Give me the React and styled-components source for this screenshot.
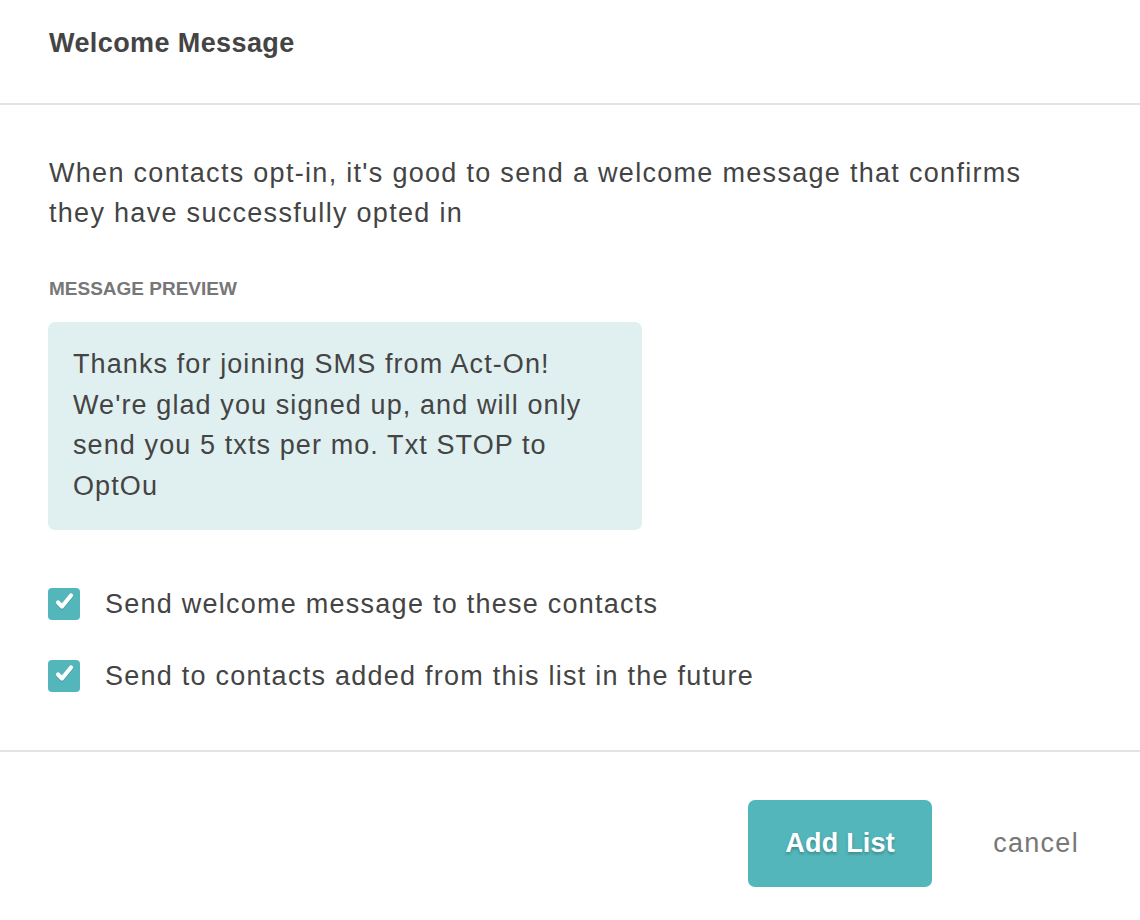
import React from "react";
import styled, { createGlobalStyle } from "styled-components";

const GlobalStyle = createGlobalStyle`
  html, body {
    margin: 0;
    padding: 0;
    background: #fff;
  }
  body {
    font-family: "Liberation Sans", Arial, Helvetica, sans-serif;
    color: #444;
  }
`;

const CheckIcon = () => (
  <svg width="32" height="32" viewBox="0 0 32 32" fill="none">
    <path
      d="M10 14.5 L14 18.5 L23 7.5"
      stroke="rgba(0,0,0,0.12)"
      strokeWidth="4.2"
      strokeLinecap="round"
      strokeLinejoin="round"
      transform="translate(0 1.2)"
    />
    <path
      d="M10 14.5 L14 18.5 L23 7.5"
      stroke="#fff"
      strokeWidth="4.2"
      strokeLinecap="round"
      strokeLinejoin="round"
    />
  </svg>
);

const Checkbox = ({ label }) => (
  <CheckRow>
    <Box>
      <CheckIcon />
    </Box>
    <CheckLabel>{label}</CheckLabel>
  </CheckRow>
);

const App = () => {
  return (
    <>
      <GlobalStyle />
      <Modal>
        <Header>
          <Title>Welcome Message</Title>
        </Header>
        <Body>
          <Intro>
            When contacts opt-in, it's good to send a welcome message that
            confirms they have successfully opted in
          </Intro>
          <SectionLabel>MESSAGE PREVIEW</SectionLabel>
          <Preview>
            Thanks for joining SMS from Act-On!
            <br />
            We're glad you signed up, and will only
            <br />
            send you 5 txts per mo. Txt STOP to
            <br />
            OptOu
          </Preview>
          <Checks>
            <Checkbox label="Send welcome message to these contacts" />
            <Checkbox label="Send to contacts added from this list in the future" />
          </Checks>
        </Body>
        <Footer>
          <PrimaryButton>Add List</PrimaryButton>
          <CancelButton>cancel</CancelButton>
        </Footer>
      </Modal>
    </>
  );
};
export default App;

const Modal = styled.div`
  width: 1140px;
  height: 920px;
  display: flex;
  flex-direction: column;
  background: #fff;
`;

const Header = styled.div`
  height: 105px;
  padding: 26px 49px 0;
  box-sizing: border-box;
  border-bottom: 2px solid #e3e3e3;
`;

const Title = styled.h1`
  margin: 0;
  font-size: 27px;
  line-height: 34px;
  font-weight: bold;
  letter-spacing: 0.4px;
  color: #444;
`;

const Body = styled.div`
  padding: 48px 49px 58px 48px;
  border-bottom: 2px solid #e3e3e3;
  display: flex;
  flex-direction: column;
  align-items: flex-start;
`;

const Intro = styled.p`
  margin: 0 0 0 1px;
  font-size: 27px;
  line-height: 40px;
  letter-spacing: 1.3px;
  max-width: 1000px;
`;

const SectionLabel = styled.div`
  margin: 45px 0 0 1px;
  font-size: 19px;
  line-height: 22px;
  font-weight: bold;
  color: #777;
`;

const Preview = styled.div`
  margin-top: 22px;
  width: 594px;
  box-sizing: border-box;
  padding: 22px 25px 24px;
  background: #e0efef;
  border-radius: 7px;
  font-size: 27px;
  line-height: 40.5px;
  letter-spacing: 1.1px;
  white-space: nowrap;
  color: #444;
`;

const Checks = styled.div`
  margin-top: 58px;
  display: flex;
  flex-direction: column;
  gap: 40px;
`;

const CheckRow = styled.label`
  display: flex;
  align-items: center;
  gap: 25px;
  height: 32px;
`;

const Box = styled.span`
  width: 32px;
  height: 32px;
  border-radius: 4px;
  background: #52b6bb;
  display: flex;
  align-items: center;
  justify-content: center;
  flex-shrink: 0;
`;

const CheckLabel = styled.span`
  font-size: 27px;
  letter-spacing: 1.25px;
  color: #444;
`;

const Footer = styled.div`
  display: flex;
  justify-content: flex-end;
  align-items: center;
  padding: 48px 61px 0 0;
  gap: 61px;
`;

const PrimaryButton = styled.button`
  width: 184px;
  height: 87px;
  border: none;
  border-radius: 7px;
  background: #52b6bb;
  color: #fff;
  font-family: inherit;
  font-size: 27px;
  font-weight: bold;
  letter-spacing: 0.2px;
  text-shadow: 0 2px 3px rgba(0, 0, 0, 0.25);
  cursor: pointer;
`;

const CancelButton = styled.button`
  border: none;
  background: none;
  padding: 0;
  font-family: inherit;
  font-size: 27px;
  letter-spacing: 1.3px;
  color: #777;
  cursor: pointer;
`;
